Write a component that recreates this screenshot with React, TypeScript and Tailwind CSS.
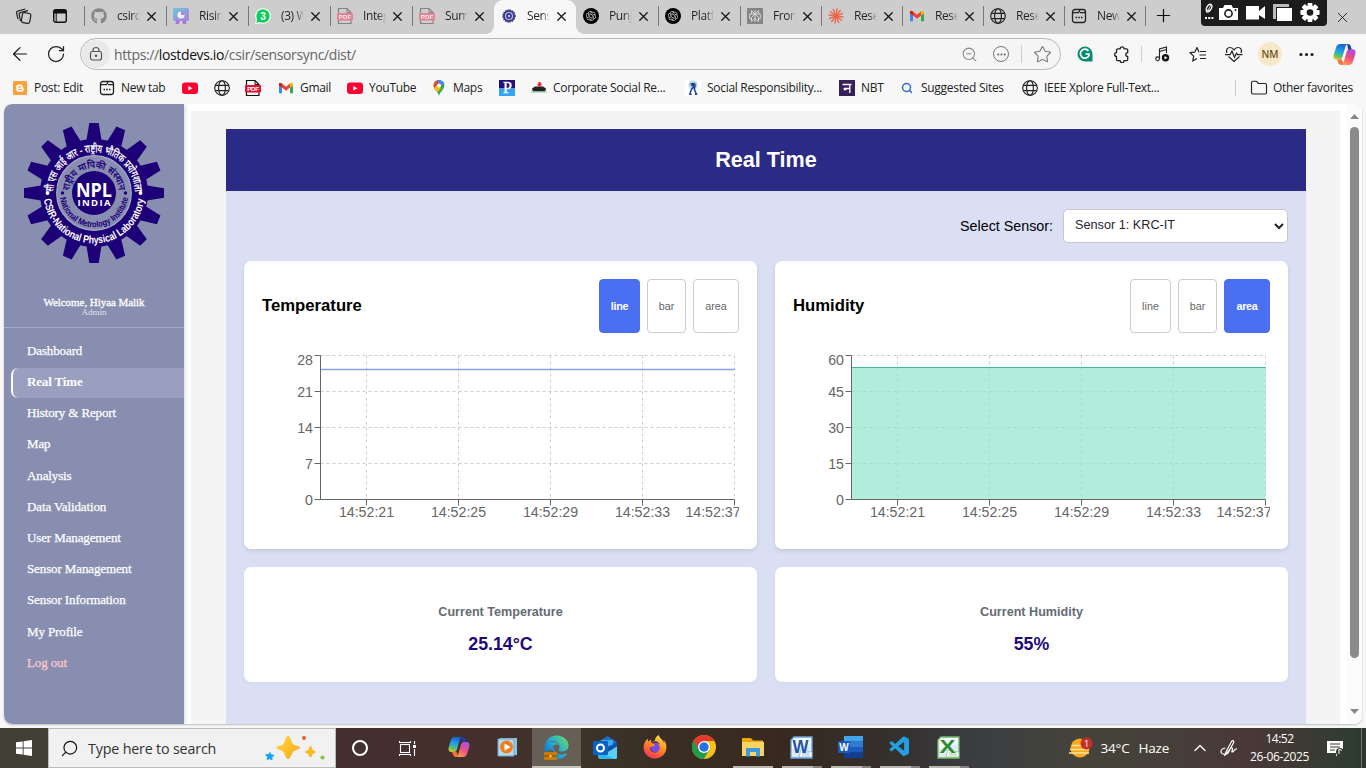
import React from "react";
import {
  ArrowLeft, RotateCw, X, Plus, ZoomOut, Star, Globe, Search,
  Ellipsis, ChevronUp, Folder,
} from "lucide-react";
import { FaGithub, FaEdge, FaFirefoxBrowser } from "react-icons/fa";
import { RiOpenaiFill } from "react-icons/ri";
import { VscVscode } from "react-icons/vsc";

/* ---------- small icons ---------- */

const Tabs3 = () => (
  <svg width="18" height="18" viewBox="0 0 18 18" fill="none" stroke="#222" strokeWidth="1.2">
    <rect x="7" y="6" width="8.500" height="10" rx="2" transform="rotate(10 11 10)" />
    <path d="M5.500 14.200 4.300 8a2.300 2.300 0 0 1 1.600-2.700L13 3.600M3 12.200 1.700 6.500a2.300 2.300 0 0 1 1.600-2.700L10.300 2" />
  </svg>
);
const WindowIcon = () => (
  <svg width="16" height="16" viewBox="0 0 16 16">
    <rect x="1.7" y="1.7" width="12.6" height="12.6" rx="2" fill="none" stroke="#111" strokeWidth="1.4" />
    <path d="M1.5 3.5a2 2 0 0 1 2-2h9a2 2 0 0 1 2 2V5.500h-13z" fill="#111" />
    <path d="M4.200 5v9" stroke="#111" strokeWidth="1" />
  </svg>
);
const NewTabIcon = () => (
  <svg width="16" height="16" viewBox="0 0 16 16" fill="none" stroke="#222" strokeWidth="1.3">
    <rect x="1.500" y="1.500" width="13" height="13" rx="2.500" />
    <path d="M2 4.600h5.500l1.500-2.400M9 4.600h5.500" />
    <path d="M4.500 9.500h1.600M7.200 9.500h1.600M9.900 9.500h1.600" strokeWidth="1.7" />
  </svg>
);
const GlobeIcon = () => (
  <svg width="16" height="16" viewBox="0 0 16 16" fill="none" stroke="#222" strokeWidth="1.150">
    <circle cx="8" cy="8" r="7.300" /><ellipse cx="8" cy="8" rx="3.400" ry="7.300" /><path d="M1.300 5.400h13.400M1.300 10.600h13.400" />
  </svg>
);
const PuzzleIcon = () => (
  <svg width="17" height="17" viewBox="0 0 17 17" fill="none" stroke="#222" strokeWidth="1.300" strokeLinejoin="round">
    <path d="M3.500 5V4a1.200 1.200 0 0 1 1.200-1.200h2.500a1.900 1.900 0 0 1 3.800 0h2.500A1.200 1.200 0 0 1 14.700 4v2.700a1.900 1.900 0 0 0 0 3.800v3a1.200 1.200 0 0 1-1.200 1.200H11a1.900 1.900 0 0 1-3.800 0H4.700a1.200 1.200 0 0 1-1.200-1.200v-3a1.900 1.900 0 0 1 0-3.800z" />
  </svg>
);
const Pdf = ({ faded = false }: { faded?: boolean }) => (
  <svg width="16" height="18" viewBox="0 0 16 18" opacity={faded ? 0.6 : 1}>
    <path d="M1.500 7V1.500h8.500l4 4V7M1.500 13v3.500h12.500V13" fill="none" stroke={faded ? "#555" : "#111"} strokeWidth="1.2" />
    <path d="M10 1.500v4h4" fill="none" stroke={faded ? "#555" : "#111"} />
    <rect x="0" y="6" width="16" height="7.500" rx="1" fill={faded ? "#f2546b" : "#e5112f"} />
    <text x="8" y="12.100" fontSize="6.200" fontWeight="700" fill="#fff" textAnchor="middle" fontFamily="Liberation Sans, sans-serif">PDF</text>
  </svg>
);
const Gmail = () => (
  <svg width="16" height="16" viewBox="0 0 16 16">
    <path d="M1 4v9.300h3V6.500z" fill="#4285f4" />
    <path d="M15 4v9.300h-3V6.500z" fill="#34a853" />
    <path d="M12 3.500 8 6.800 4 3.500v4.100l4 3.200 4-3.200z" fill="#ea4335" />
    <path d="M1 3.800C1 2.400 2.800 2.400 4 3.500v4.100L1 5.400z" fill="#c5221f" />
    <path d="M15 3.800c0-1.400-1.800-1.400-3-.3v4.100l3-2.200z" fill="#fbbc04" />
  </svg>
);
const YouTube = () => (
  <svg width="16" height="16" viewBox="0 0 16 16">
    <rect x="0" y="2.500" width="16" height="11.500" rx="3" fill="#ff0033" />
    <path d="M6.400 5.900v4.700l4.100-2.350z" fill="#fff" />
  </svg>
);
const Claude = () => (
  <svg width="16" height="16" viewBox="0 0 16 16" stroke="#e8674a" strokeWidth="1.4" strokeLinecap="round">
    {[0, 30, 60, 90, 120, 150, 180, 210, 240, 270, 300, 330].map((a) => (
      <path key={a} d="M8 7.500V1" transform={`rotate(${a + 8} 8 8)`} />
    ))}
  </svg>
);
const Perplexity = () => (
  <svg width="16" height="16" viewBox="0 0 16 16">
    <rect width="16" height="16" fill="#858585" />
    <path d="M8 2v12M8 6 4.500 2.500V6M8 6l3.500-3.500V6M2.700 6h10.600v4.700h-2M2.700 6v4.700h2M8 6l-3.500 3.500v4L8 10.300l3.500 3.200v-4z" fill="none" stroke="#dedede" strokeWidth="0.900" />
  </svg>
);
const Canvas = () => (
  <svg width="16" height="16" viewBox="0 0 16 16">
    <defs><linearGradient id="rise" x2="1" y2="1"><stop stopColor="#68c7da" /><stop offset="1" stopColor="#b57ddb" /></linearGradient></defs>
    <rect width="16" height="13" rx="2" fill="url(#rise)" />
    <path d="M3 12h4l-1 4H2.500zM9 12h4l.5 4H10z" fill="#a779dc" />
    <circle cx="8" cy="7" r="3.600" fill="#f4eefb" />
    <path d="M8 7V3.200A3.800 3.800 0 0 1 11.800 7z" fill="#9a8bdc" />
  </svg>
);
const WhatsApp = () => (
  <svg width="16" height="16" viewBox="0 0 16 16">
    <circle cx="8" cy="8" r="7.800" fill="#fff" /><path d="M0 16l1.500-5 4 4z" fill="#fff" />
    <circle cx="8" cy="8" r="6.700" fill="#0bcf5a" /><path d="M1.200 14.800l1.200-4 3 3z" fill="#0bcf5a" />
    <text x="8" y="11.500" fontSize="10" fontWeight="700" textAnchor="middle" fill="#fff" fontFamily="Liberation Sans, sans-serif">3</text>
  </svg>
);
const MiniGear = () => (
  <svg width="16" height="16" viewBox="0 0 16 16">
    <rect width="16" height="16" fill="#fff" />
    <circle cx="8" cy="8" r="6" fill="#3b3c8e" stroke="#3b3c8e" strokeWidth="1.500" strokeDasharray="1.500 0.860" />
    <circle cx="8" cy="8" r="3.500" fill="none" stroke="#b8bbe0" strokeWidth="1.200" />
    <circle cx="8" cy="8" r="0.900" fill="#fff" />
  </svg>
);
const OpenAi = () => (
  <span className="flex h-4 w-4 items-center justify-center rounded-full bg-black text-[#d0d0d0]"><RiOpenaiFill size={12} /></span>
);
const Blogger = () => (
  <svg width="16" height="16" viewBox="0 0 16 16">
    <rect x="1" y="1" width="14" height="14" rx="1.500" fill="#f9a13a" />
    <path d="M6.500 4.500H8.500a2 2 0 0 1 2 2c0 1 1.200.8 1.200 1.900v1.100a2.200 2.200 0 0 1-2.200 2.200h-3a2.200 2.200 0 0 1-2.200-2.200v-2.800a2.200 2.200 0 0 1 2.200-2.200z" fill="#fff" />
    <path d="M6.500 6.800h2M6.500 9.500h3" stroke="#f9a13a" strokeWidth="1.200" strokeLinecap="round" />
  </svg>
);
const MapPin = () => (
  <svg width="16" height="16" viewBox="0 0 16 16">
    <clipPath id="pin"><path d="M8 0a5.400 5.400 0 0 0-5.400 5.400C2.600 9.500 7 11 8 16c1-5 5.400-6.500 5.400-10.600A5.400 5.400 0 0 0 8 0z" /></clipPath>
    <g clipPath="url(#pin)">
      <rect width="16" height="16" fill="#34a853" />
      <path d="M0 0h8v3L3 9H0z" fill="#ea4335" /><path d="M6 0h10v3L9 6z" fill="#4285f4" /><path d="M2 9 6 5l4 3-5 6z" fill="#fbbc04" />
      <circle cx="8" cy="5.400" r="2" fill="#fff" />
    </g>
  </svg>
);
const PIcon = () => (
  <svg width="16" height="16" viewBox="0 0 16 16">
    <rect width="16" height="8.500" fill="#21107a" /><rect y="8.500" width="16" height="7.500" fill="#36a4f4" />
    <text x="8.200" y="12.800" fontSize="16" textAnchor="middle" fill="#fff" stroke="#fff" strokeWidth=".4" fontFamily="Liberation Serif, serif">P</text>
  </svg>
);
const Corporate = () => (
  <svg width="16" height="16" viewBox="0 0 16 16">
    <path d="M1 9h14l1 4H0z" fill="#b7dfb9" />
    <path d="M1 8.500 4 6.500h8l3 2-1 2.800H2z" fill="#222" /><path d="M6.500 3.500h1V2h2v1.500h1v2h-1v1.500h-2V5.500h-1z" fill="#e3252f" />
  </svg>
);
const Social = () => (
  <svg width="16" height="16" viewBox="0 0 16 16">
    <rect width="16" height="16" fill="#fff" /><circle cx="8" cy="5" r="4.600" fill="#b9dcf4" />
    <path d="M4.500 4 8 2.700 11.500 4 8 5.300z" fill="#333" />
    <path d="M6 5.500h4L9.300 9l2 5M10 5.500 6.700 9l-2 5M4.200 14.200h2.500M9.800 14.200h2.500" stroke="#22439a" strokeWidth="1.500" fill="none" />
  </svg>
);
const Nbt = () => (
  <svg width="16" height="16" viewBox="0 0 16 16">
    <rect width="16" height="16" fill="#352058" />
    <path d="M3.500 4.500h9M10.800 4.500v8.500M5 8.500h5.800M7.500 8.500c0 1.500-2.500 1.800-2.600 0" stroke="#fff" strokeWidth="1.300" fill="none" />
  </svg>
);
const Copilot = ({ size = 22, id }: { size?: number; id: string }) => (
  <svg width={size} height={size} viewBox="0 0 22 22">
    <defs>
      <linearGradient id={id + "a"} x1="0.500" y1="0" x2="0.200" y2="1"><stop stopColor="#1565d8" /><stop offset=".45" stopColor="#20a4e8" /><stop offset=".75" stopColor="#58c26a" /><stop offset="1" stopColor="#f0c22a" /></linearGradient>
      <linearGradient id={id + "b"} x1="0.800" y1="0" x2="0.300" y2="1"><stop stopColor="#a34ee8" /><stop offset=".5" stopColor="#ec4e86" /><stop offset="1" stopColor="#ff9a4e" /></linearGradient>
    </defs>
    <path d="M13.500 1h1c1.500 0 2.200 1 2.600 2.500l1 3.200h-3.600z" fill="#1c3fb4" />
    <path d="M7 1h7.500c-1.700 0-2.300 1.300-2.800 3L9 13.500C8.500 15 7.600 16 6 16H3.500C1 16 0 14 .6 11.500L3 4C3.700 2 5 1 7 1z" fill={`url(#${id}a)`} />
    <path d="M15 21H7.500c1.700 0 2.300-1.300 2.800-3L13 8.500C13.500 7 14.400 6 16 6h2.500c2.500 0 3.500 2 2.900 4.500L19 18c-.7 2-2 3-4 3z" fill={`url(#${id}b)`} />
    <path d="M4 15.800h4.500L9.800 19c.3 1-.8 2-2.300 2C5.500 21 5 19 4 15.800z" fill="#f4763a" />
  </svg>
);

/* ---------- browser chrome ---------- */

type Tab = { icon: React.ReactNode; title: string; w: string; active?: boolean; bar?: boolean };
const tabs: Tab[] = [
  { icon: <FaGithub size={16} color="#85868a" />, title: "csirc", w: "w-[82px]", bar: true },
  { icon: <Canvas />, title: "Risin", w: "w-[82px]", bar: true },
  { icon: <WhatsApp />, title: "(3) W", w: "w-[82px]", bar: true },
  { icon: <Pdf faded />, title: "Integ", w: "w-[82px]", bar: true },
  { icon: <Pdf faded />, title: "Sum", w: "w-[82px]", bar: true },
  { icon: <MiniGear />, title: "Sens", w: "w-[82px]", active: true },
  { icon: <OpenAi />, title: "Punj", w: "w-[82px]" },
  { icon: <OpenAi />, title: "Platf", w: "w-[82px]", bar: true },
  { icon: <Perplexity />, title: "Fron", w: "w-[81px]", bar: true },
  { icon: <Claude />, title: "Rese", w: "w-[81px]", bar: true },
  { icon: <Gmail />, title: "Rese", w: "w-[81px]", bar: true },
  { icon: <GlobeIcon />, title: "Rese", w: "w-[81px]", bar: true },
  { icon: <NewTabIcon />, title: "New", w: "w-[81px]", bar: true },
];

function TabStrip() {
  return (
    <div className="flex h-[34px] bg-[#cdcdcd]">
      <div className="flex w-[84px] items-center gap-[19px] pl-[15px] pb-[2px]">
        <Tabs3 />
        <WindowIcon />
      </div>
      {tabs.map((t, i) => (
        <div key={i} className={`relative flex h-full shrink-0 items-center pb-[2px] ${t.w} ${t.active ? "rounded-t-[9px] bg-[#f7f7f7]" : ""}`}>
          <span className={`h-5 w-px ${t.bar ? "bg-[#777]" : ""}`} />
          <span className="ml-[6px] flex w-4 justify-center">{t.icon}</span>
          <span className="ml-[10px] w-[23px] overflow-hidden whitespace-nowrap bg-linear-to-r from-[#222] from-65% to-transparent bg-clip-text text-[12px] tracking-[-0.4px] text-transparent">{t.title}</span>
          <X className="ml-[4px]" size={15} strokeWidth={2.100} color="#151515" />
          {t.active && (
            <>
              <span className="absolute -left-[8px] bottom-0 h-2 w-2 bg-[radial-gradient(circle_at_0_0,#cdcdcd_7.500px,#f7f7f7_8px)]" />
              <span className="absolute -right-[8px] bottom-0 h-2 w-2 bg-[radial-gradient(circle_at_100%_0,#cdcdcd_7.500px,#f7f7f7_8px)]" />
            </>
          )}
        </div>
      ))}
      <div className="flex w-[56px] items-center pb-[3px]">
        <span className="h-5 w-px bg-[#777]" />
        <Plus className="ml-[7px]" size={21} strokeWidth={1.400} color="#111" />
      </div>
      <div className="flex h-[26px] w-[126px] items-center rounded-b-[4px] bg-[#1c1c1c] pl-[3px]">
        <svg width="120" height="26" viewBox="0 0 120 26">
          <g fill="none" stroke="#fff" strokeWidth="1.300"><ellipse cx="5" cy="8" rx="2.300" ry="4" transform="rotate(30 5 8)" /><path d="M2.500 13 7.500 4M2 10l5 0" strokeWidth=".8" /></g>
          <path d="M1 17h2v2H1zM4.200 17h2v2h-2zM7.400 17h2v2h-2z" fill="#fff" />
          <path d="M15 8h4l1.500-3h7L29 8h5v12H15z" fill="#fff" /><circle cx="24.500" cy="13.500" r="3.600" fill="none" stroke="#1c1c1c" strokeWidth="1.600" /><circle cx="31.500" cy="10" r="1" fill="#1c1c1c" />
          <path d="M42 6h13v13.500H42zM55 11l6-5v13l-6-4z" fill="#fff" />
          <path d="M69 4h16v3H72v12h-3z" fill="#bbb" /><path d="M73 8h15v13H73z" fill="#fff" />
          <g transform="translate(106 12.500)" fill="#fff">
            {[0, 45, 90, 135].map((a) => <rect key={a} x="-2.400" y="-9.600" width="4.800" height="19.200" rx=".8" transform={`rotate(${a})`} />)}
            <circle r="7" /><circle r="3.300" fill="#1c1c1c" />
          </g>
        </svg>
      </div>
      <X className="mt-[9px] ml-[7px]" size={17} strokeWidth={1.300} color="#222" />
    </div>
  );
}

const ToolSlot = ({ children, w }: { children: React.ReactNode; w: string }) => (
  <span className={`flex shrink-0 items-center justify-center ${w}`}>{children}</span>
);

function Toolbar() {
  return (
    <div className="flex h-[40px] items-center bg-[#f7f7f7]">
      <ToolSlot w="w-[39px]"><ArrowLeft size={22} strokeWidth={1.300} color="#111" /></ToolSlot>
      <ToolSlot w="w-[33px]"><RotateCw size={20} strokeWidth={1.500} color="#222" /></ToolSlot>
      <div className="ml-[8px] flex h-[32px] w-[981px] shrink-0 items-center rounded-full border border-[#b9b9b9] bg-[#f5f5f5] pl-px">
        <span className="flex h-7 w-7 shrink-0 items-center justify-center rounded-full bg-[#e9e9e9]">
          <svg width="14" height="16" viewBox="0 0 14 16" fill="none" stroke="#555" strokeWidth="1.200"><rect x="1.500" y="5.500" width="11" height="8.500" rx="2" /><path d="M4 5.500V4.500a3 3 0 0 1 6 0v1" /><circle cx="7" cy="9.800" r=".7" fill="#555" /></svg>
        </span>
        <span className="ml-[4px] grow text-[14px] tracking-[-0.370px] text-[#666]">https://<span className="text-[#111]">lostdevs.io</span>/csir/sensorsync/dist/</span>
        <ToolSlot w="w-[32px]"><ZoomOut size={17} strokeWidth={1.500} color="#888" /></ToolSlot>
        <ToolSlot w="w-[32px]">
          <span className="flex h-4 w-4 items-center justify-center rounded-full border border-[#777]"><Ellipsis size={11} strokeWidth={2.500} color="#666" /></span>
        </ToolSlot>
        <ToolSlot w="w-[8px]"><i className="h-[18px] w-px bg-[#cfcfcf]" /></ToolSlot>
        <ToolSlot w="w-[34px]"><Star size={19} strokeWidth={1.400} color="#777" /></ToolSlot>
        <span className="w-px" />
      </div>
      <ToolSlot w="w-[48px]">
        <svg width="16" height="16" viewBox="0 0 16 16"><path d="M8 .5A7.500 7.500 0 0 1 15.500 8v7.500H8A7.500 7.500 0 0 1 8 .5z" fill="#0b8a72" /><path d="M11.500 5A4.500 4.500 0 1 0 12 9.500V8H8.500" fill="none" stroke="#fff" strokeWidth="1.700" /></svg>
      </ToolSlot>
      <ToolSlot w="w-[24px]"><PuzzleIcon /></ToolSlot>
      <ToolSlot w="w-[16px]"><i className="h-[16px] w-px bg-[#cfcfcf]" /></ToolSlot>
      <ToolSlot w="w-[26px]">
        <svg width="16" height="16" viewBox="0 0 16 16" fill="none" stroke="#222" strokeWidth="1.100"><path d="M5.500 12.500V3l7-2v6M5.500 5.500l7-2" /><circle cx="3.600" cy="12.800" r="1.900" /><circle cx="11.500" cy="11.800" r="3.700" fill="#111" stroke="none" /><path d="M10.500 10v3.600l3-1.800z" fill="#fff" stroke="none" /></svg>
      </ToolSlot>
      <ToolSlot w="w-[46px]">
        <svg width="18" height="17" viewBox="0 0 18 17" fill="none" stroke="#222" strokeWidth="1.200" strokeLinejoin="round"><path d="M10 6.300 8 1.500 5.900 6.100 1 6.700l3.700 3.400-1 5 4.300-2.500M11 5.500h6M10.500 9h6.500M11 12.500h6" /></svg>
      </ToolSlot>
      <ToolSlot w="w-[26px]">
        <svg width="18" height="17" viewBox="0 0 18 17" fill="none" stroke="#222" strokeWidth="1.200"><path d="M2 7C.6 3.500 2.500 1.500 5 1.500c1.700 0 3 .8 4 2.300 1-1.500 2.300-2.300 4-2.300 2.500 0 4.400 2 3 5.500M3.500 10.500 9 15.500l5.500-5M0 8.700h5l2-3.500 2.500 6 2-4 1 1.500h5" /></svg>
      </ToolSlot>
      <ToolSlot w="w-[46px]"><span className="flex h-6 w-6 items-center justify-center rounded-full bg-[#f7e8c9] text-[10px] font-semibold text-[#6e5418]">NM</span></ToolSlot>
      <ToolSlot w="w-[26px]"><Ellipsis size={19} strokeWidth={2.100} color="#222" /></ToolSlot>
      <ToolSlot w="w-[50px]"><Copilot id="tc" size={23} /></ToolSlot>
    </div>
  );
}

const favorites: { icon: React.ReactNode; label?: string; w: string }[] = [
  { icon: <Blogger />, label: "Post: Edit", w: "w-[87px]" },
  { icon: <NewTabIcon />, label: "New tab", w: "w-[83px]" },
  { icon: <YouTube />, w: "w-[32px]" },
  { icon: <GlobeIcon />, w: "w-[31px]" },
  { icon: <Pdf />, w: "w-[33px]" },
  { icon: <Gmail />, label: "Gmail", w: "w-[69px]" },
  { icon: <YouTube />, label: "YouTube", w: "w-[84px]" },
  { icon: <MapPin />, label: "Maps", w: "w-[68px]" },
  { icon: <PIcon />, w: "w-[32px]" },
  { icon: <Corporate />, label: "Corporate Social Re...", w: "w-[154px]" },
  { icon: <Social />, label: "Social Responsibility...", w: "w-[154px]" },
  { icon: <Nbt />, label: "NBT", w: "w-[60px]" },
  { icon: <Search size={12} strokeWidth={3} color="#2b6cc8" />, label: "Suggested Sites", w: "w-[123px]" },
  { icon: <GlobeIcon />, label: "IEEE Xplore Full-Text...", w: "w-[213px]" },
];

function FavoritesBar() {
  return (
    <div className="flex h-[30px] items-center bg-[#f7f7f7] pl-[12px] pb-[2px] text-[12px] tracking-[-0.3px] whitespace-nowrap text-[#222]">
      {favorites.map((f, i) => (
        <div key={i} className={`flex shrink-0 items-center gap-[6px] ${f.w}`}>
          <span className="flex w-4 shrink-0 justify-center">{f.icon}</span>
          {f.label}
        </div>
      ))}
      <i className="h-4 w-px bg-[#ccc]" />
      <Folder className="mr-[5px] ml-[14px]" size={18} strokeWidth={1.500} color="#222" />
      Other favorites
    </div>
  );
}

/* ---------- sidebar ---------- */

function Emblem() {
  const teeth = Array.from({ length: 16 }, (_, i) => i * 22.5);
  return (
    <svg width="140" height="140" viewBox="-70 -70 140 140">
      <defs>
        <path id="outerTop" d="M-40.600 4A40.800 40.800 0 1 1 40.600 4" />
        <path id="outerBottom" d="M-50.500 0A50.500 50.500 0 0 0 50.500 0" />
        <path id="innerTop" d="M-24.800 3A25 25 0 1 1 24.800 3" />
        <path id="innerBottom" d="M-34.300 0A34.300 34.300 0 0 0 34.300 0" />
      </defs>
      <g fill="#1d0078">
        {teeth.map((a) => <path key={a} d="M-8-50-4.700-70H4.700L8-50z" transform={`rotate(${a})`} />)}
        <circle r="54" />
      </g>
      <circle r="37.300" fill="#888eb0" stroke="#a9adca" strokeWidth="1.200" />
      <circle r="22" fill="#1d0078" />
      <g fontFamily="'Liberation Sans Narrow', 'Liberation Sans', 'Noto Sans', sans-serif" fontWeight="700" textAnchor="middle">
        <g fill="#fff">
          <text fontSize="11" fontWeight="400" stroke="#fff" strokeWidth=".3"><textPath href="#outerTop" startOffset="50%" textLength="126" lengthAdjust="spacingAndGlyphs">सी एस आई आर - राष्ट्रीय भौतिक प्रयोगशाला</textPath></text>
          <text fontSize="10.800"><textPath href="#outerBottom" startOffset="50%" textLength="146" lengthAdjust="spacingAndGlyphs">CSIR-National Physical Laboratory</textPath></text>
          <circle cx="-46.500" r="1.900" /><circle cx="46.500" r="1.900" />
          <text y="3.500" fontSize="19" textLength="36" lengthAdjust="spacingAndGlyphs" fontFamily="Open Sans, sans-serif">NPL</text>
          <text y="12.800" fontSize="9.500" textLength="33" fontFamily="Open Sans, sans-serif">INDIA</text>
        </g>
        <g fill="#1d0078">
          <text fontSize="9.500" fontWeight="400" stroke="#1d0078" strokeWidth=".3"><textPath href="#innerTop" startOffset="50%" textLength="74" lengthAdjust="spacingAndGlyphs">राष्ट्रीय मापिकी संस्थान</textPath></text>
          <text fontSize="8.800"><textPath href="#innerBottom" startOffset="50%" textLength="98" lengthAdjust="spacingAndGlyphs">National Metrology Institute</textPath></text>
          <circle cx="-31.500" r="1.700" /><circle cx="31.500" r="1.700" />
        </g>
      </g>
    </svg>
  );
}

const menu = ["Dashboard", "Real Time", "History & Report", "Map", "Analysis", "Data Validation", "User Management", "Sensor Management", "Sensor Information", "My Profile", "Log out"];

function Sidebar() {
  return (
    <aside className="flex w-[180px] shrink-0 flex-col rounded-l-[8px] bg-[#888eb0] font-['Liberation_Serif',serif] text-white shadow-[1px_0_4px_#8885]">
      <div className="flex justify-center pt-[19px]"><Emblem /></div>
      <div className="mt-[33px] flex h-[32px] flex-col items-center border-b border-[#a6abc9] leading-none">
        <span className="text-[11px] leading-[12px] tracking-[-0.050px] [-webkit-text-stroke:0.3px_white]">Welcome, Hiyaa Malik</span>
        <span className="text-[9px] leading-[9px] text-[#e0e3ef]">Admin</span>
      </div>
      <nav className="mt-[8px] flex flex-col">
        {menu.map((m) => {
          const active = m === "Real Time";
          return (
            <div key={m} className="flex h-[31.200px] items-center pl-[7px]">
              <a className={`flex h-[30px] w-full items-center pb-[2px] text-[13px] ${active ? "rounded-l-[7px] border-l-2 border-white bg-[#9b9fbf] pl-[14px] font-bold tracking-[-0.150px]" : "pl-[16px] tracking-[-0.120px] [-webkit-text-stroke:0.250px]"} ${m === "Log out" ? "text-[#ffc9cd]" : "text-white"}`}>{m}</a>
            </div>
          );
        })}
      </nav>
    </aside>
  );
}

/* ---------- charts ---------- */

type ChartKind = "line" | "bar" | "area";
const times = ["14:52:21", "14:52:25", "14:52:29", "14:52:33", "14:52:37"];

function Chart({ ticks, value, kind }: { ticks: number[]; value: number; kind: ChartKind }) {
  const max = ticks[0];
  const y = 4 + 144 * (1 - value / max);
  return (
    <svg className="mt-[18px] block" width="477" height="180" viewBox="0 0 477 180" fontFamily="'Liberation Sans', Arial, sans-serif" fontSize="14.200" fill="#666">
      <g stroke="#ccc" strokeDasharray="3 3">
        {ticks.slice(0, 4).map((t, i) => <path key={t} d={`M58.500 ${4.500 + i * 36}H472.500`} />)}
        {times.map((t, i) => <path key={t} d={`M${104.500 + i * 92} 4.500V148.500`} />)}
      </g>
      {kind === "area" && (
        <>
          <path d={`M58.500 ${y}H472.500V148.500H58.500z`} fill="#b2ecdb" />
          <g stroke="#a3dfcb" strokeDasharray="3 3">
            {[1, 2, 3].map((i) => <path key={i} d={`M58.500 ${4.500 + i * 36}H472.500`} />)}
            {times.map((t, i) => <path key={t} d={`M${104.500 + i * 92} ${y}V148.500`} />)}
          </g>
        </>
      )}
      <path d={`M58.500 ${Math.floor(y) + 0.500}H472.500`} stroke={kind === "area" ? "#3fb995" : "#8aa0f5"} strokeWidth={kind === "area" ? 1 : 1.300} fill="none" />
      <g stroke="#666" fill="none">
        <path d="M58.500 4.500V148.500H472.500" />
        {ticks.map((t, i) => <path key={t} d={`M52.500 ${4.500 + i * 36}h6`} />)}
        {times.map((t, i) => <path key={t} d={`M${104.500 + i * 92} 148.500v6`} />)}
      </g>
      {ticks.map((t, i) => <text key={t} x="51" y={i === 0 ? 14 : 10 + i * 36} textAnchor="end">{t}</text>)}
      {times.map((t, i) => <text key={t} x={i === 4 ? 451 : 104.500 + i * 92} y="166" textAnchor="middle">{t}</text>)}
    </svg>
  );
}

function ChartCard({ title, active, ticks, value }: { title: string; active: ChartKind; ticks: number[]; value: number }) {
  const kinds: [ChartKind, string][] = [["line", "w-[41px]"], ["bar", "w-[39px]"], ["area", "w-[46px]"]];
  return (
    <section className="h-[288px] overflow-hidden rounded-[7px] bg-white p-[18px] shadow-[0_2px_4px_rgba(0,0,0,0.100)]">
      <div className="flex h-[54px] items-center justify-between">
        <h3 className="text-[16.700px] font-bold text-black">{title}</h3>
        <div className="flex gap-[7px]">
          {kinds.map(([k, w]) => (
            <button key={k} className={`h-[54px] rounded-[4px] border text-[10.800px] ${w} ${k === active ? "border-[#4a6ff0] bg-[#4a6ff0] font-bold tracking-[-0.300px] text-white" : "border-[#ccc] bg-white text-[#666]"}`}>{k}</button>
          ))}
        </div>
      </div>
      <Chart ticks={ticks} value={value} kind={active} />
    </section>
  );
}

function StatCard({ label, value }: { label: string; value: string }) {
  return (
    <section className="flex h-[115px] flex-col items-center rounded-[7px] bg-white pt-[36px] shadow-[0_2px_4px_rgba(0,0,0,0.030)]">
      <h4 className="text-[12.600px] leading-[19px] font-bold text-[#666b73]">{label}</h4>
      <p className="mt-[10px] text-[17.800px] leading-[24px] font-bold text-[#1f0a78]">{value}</p>
    </section>
  );
}

function Dashboard() {
  return (
    <main className="mt-[7px] ml-[7px] flex w-[1149px] flex-col bg-[#f4f4f4] px-[35px] pr-[34px] pt-[18px] font-['Liberation_Sans',Arial,sans-serif]">
      <header className="flex h-[62px] shrink-0 items-center justify-center bg-[#2b2a85] text-[21.600px] font-bold text-white">Real Time</header>
      <div className="flex grow flex-col gap-[18px] bg-[#dbdff3] p-[18px]">
        <div className="flex h-[34px] items-center justify-end gap-[10px]">
          <label className="pt-px text-[14.300px] text-black">Select Sensor:</label>
          <select className="h-[34px] w-[225px] rounded-[5px] border border-[#c8c8c8] bg-white pb-[2px] pl-[7px] text-[12.700px] text-[#1f2430]">
            <option>Sensor 1: KRC-IT</option>
          </select>
        </div>
        <div className="grid grid-cols-2 gap-[18px]">
          <ChartCard title="Temperature" active="line" ticks={[28, 21, 14, 7, 0]} value={25.14} />
          <ChartCard title="Humidity" active="area" ticks={[60, 45, 30, 15, 0]} value={55} />
          <StatCard label="Current Temperature" value="25.14°C" />
          <StatCard label="Current Humidity" value="55%" />
        </div>
      </div>
    </main>
  );
}

function Viewport() {
  return (
    <div className="flex h-[624px] bg-[#f7f7f7] px-[4px] pb-[4px]">
      <div className="flex h-[620px] w-[1358px] overflow-hidden rounded-[8px] bg-white shadow-[0_1px_2px_#9999]">
        <Sidebar />
        <Dashboard />
        <div className="ml-[7px] flex w-[15px] flex-col items-center justify-between bg-[#fbfbfb] py-[9px]">
          <svg width="9" height="6" viewBox="0 0 9 6"><path d="M0 6 4.500 1 9 6z" fill="#868686" /></svg>
          <i className="mt-[8px] mb-auto h-[531px] w-[9px] rounded-full bg-[#8a8a8a]" />
          <svg width="9" height="6" viewBox="0 0 9 6"><path d="M0 0 4.500 5 9 0z" fill="#868686" /></svg>
        </div>
      </div>
    </div>
  );
}

/* ---------- taskbar ---------- */

const WinLogo = () => (
  <svg width="16" height="16" viewBox="0 0 16 16" fill="#fff"><path d="M0 2.300 6.700 1.400V7.500H0zM7.600 1.200 16 0v7.500H7.600zM0 8.500h6.700v6.100L0 13.700zM7.600 8.500H16V16l-8.400-1.200z" /></svg>
);
const Sparkles = () => (
  <svg width="62" height="26" viewBox="0 0 62 26">
    <defs><linearGradient id="sp" x2="1" y2="1"><stop stopColor="#ffd93b" /><stop offset="1" stopColor="#f6a81c" /></linearGradient></defs>
    <path d="M24 1c2.500 0 3.500 6 5 8s7 1.500 7 3.500-5.500 2.500-7 4.500-2.500 7-5 7-3-5-4.500-7-7-2.500-7-4.500 5.500-1.500 7-3.500S21.500 1 24 1z" fill="url(#sp)" />
    <path d="M46.500 11c1.300 0 1.500 3 2.300 4s3 .7 3 2-2.200 1-3 2-1 3.500-2.300 3.500-1.500-2.500-2.300-3.500-3.200-.7-3.200-2 2.400-1 3.200-2 1-4 2.300-4z" fill="#fbb924" />
    <path d="m6 17.500 1 2.500 3 .3-2.200 2 .2 2.700-2.300-1.500-2.500 1 .5-2.700-2-2 3-.3z" fill="#12a5f4" stroke="#12a5f4" strokeLinejoin="round" />
    <circle cx="40" cy="3" r="2" fill="#ee5b24" /><circle cx="58.500" cy="22.500" r="2.100" fill="#86c440" />
  </svg>
);
const TaskView = () => (
  <svg width="17" height="17" viewBox="0 0 17 17" fill="none" stroke="#fff" strokeWidth="1.100"><rect x="1.500" y="4.500" width="9" height="8" /><path d="M.5 1v1.500h11V1M.5 16v-1.500h11V16M15.500 1v3M15.500 9v7" /><path d="M14 5h3v3h-3z" fill="#fff" stroke="none" /></svg>
);
const Media = () => (
  <svg width="22" height="20" viewBox="0 0 22 20"><path d="M3 1h17v17H3z" fill="#8fc4e4" /><path d="M1 2h16v17H1z" fill="#b8d9ec" stroke="#6aa7cc" /><circle cx="9.500" cy="10" r="6.500" fill="#f47c20" /><path d="M7.500 6.300v7.500l6-3.800z" fill="#fff" /></svg>
);
const EdgeIcon = () => (
  <span className="relative flex h-[25px] w-[25px]">
    <svg width="0" height="0" className="absolute"><defs><linearGradient id="edge" x1="0" y1="1" x2="1" y2="0.200"><stop stopColor="#0b5bb5" /><stop offset=".5" stopColor="#22a5df" /><stop offset="1" stopColor="#5fd96a" /></linearGradient></defs></svg>
    <FaEdge size={25} style={{ fill: "url(#edge)" }} />
    <svg className="absolute bottom-0 left-0" width="13" height="10" viewBox="0 0 13 10"><path d="M4 3V1h5v2" fill="none" stroke="#7a4a05" /><rect y="2" width="13" height="8" rx="1" fill="#c87a0c" /><path d="M0 6h13" stroke="#7c4603" /><path d="M5.500 5h2v2.500h-2z" fill="#ffd257" /></svg>
  </span>
);
const Outlook = () => (
  <svg width="25" height="23" viewBox="0 0 25 23"><path d="M5 6 14.500 0 24 6v3H5z" fill="#1a6fc0" /><path d="M8 4h12v9H8z" fill="#3fa7ea" /><path d="M5 8l19 0v13a2 2 0 0 1-2 2H7a2 2 0 0 1-2-2z" fill="#2fb8f0" /><path d="M24 7 9 17l13 6a2 2 0 0 0 2-2z" fill="#5ccff6" /><path d="M24 6.500v4l-10 6-3-4z" fill="#1550a8" /><rect y="5" width="15" height="14" rx="1" fill="#0a63c4" /><circle cx="7.500" cy="12" r="3.500" fill="none" stroke="#fff" strokeWidth="2" /></svg>
);
const Firefox = () => (
  <span className="relative flex">
    <svg width="0" height="0" className="absolute"><defs><linearGradient id="ff" x1="0.800" y1="0" x2="0.300" y2="1"><stop stopColor="#ffe14a" /><stop offset=".5" stopColor="#ff8a1e" /><stop offset="1" stopColor="#f5305e" /></linearGradient></defs></svg>
    <svg className="absolute top-[7px] left-[7px]" width="11" height="11"><circle cx="5.500" cy="5.500" r="5" fill="#7a4be0" /></svg>
    <FaFirefoxBrowser size={24} style={{ fill: "url(#ff)" }} className="relative" />
  </span>
);
const Chrome = () => (
  <svg width="24" height="24" viewBox="0 0 24 24">
    <circle cx="12" cy="12" r="12" fill="#fbc116" />
    <path d="M12 12 1.600 6A12 12 0 0 1 22.400 6H12z" fill="#e33b2e" />
    <path d="M1.600 6A12 12 0 0 0 12 24l5.200-9-5.200-3z" fill="#229a4c" />
    <path d="M1.600 6 6.800 15 12 12V6z" fill="#e33b2e" /><path d="M6.800 15 1.600 6a12 12 0 0 0 0 12z" fill="#229a4c" />
    <circle cx="12" cy="12" r="6" fill="#fff" /><circle cx="12" cy="12" r="4.700" fill="#1f73e8" />
  </svg>
);
const Explorer = () => (
  <svg width="22" height="19" viewBox="0 0 22 19"><path d="M0 0h9l2 2.500h10V8H0z" fill="#e8a713" /><path d="M0 4h22v14H0z" fill="#fcd462" /><path d="M4 18.500V10h14v8.500h-4V14H8v4.500z" fill="#3c9be0" /></svg>
);
const Office2010 = ({ letter, c1, c2 }: { letter: string; c1: string; c2: string }) => (
  <svg width="23" height="23" viewBox="0 0 23 23"><path d="M4 1h18v21H1V4z" fill="#dfeaf2" stroke={c2} strokeWidth="1.300" /><path d="M5 2h16v6L2 13V5z" fill="#f4f9fc" /><path d="M11 14l11 2v5H9z" fill="#fff" stroke={c2} strokeWidth=".6" /><path d="M12 17h8M12 19h8" stroke={c2} strokeWidth=".7" /><text x="10.500" y="16.500" fontSize="18" fontWeight="700" textAnchor="middle" fill={c1} textLength="16" lengthAdjust="spacingAndGlyphs" fontFamily="Liberation Sans, sans-serif">{letter}</text></svg>
);
const Word = () => (
  <svg width="25" height="22" viewBox="0 0 25 22"><path d="M6 0h19v5.500H6z" fill="#41a5ee" /><path d="M6 5.500h19V11H6z" fill="#2b7cd3" /><path d="M6 11h19v5.500H6z" fill="#185abd" /><path d="M6 16.500h19V22H6z" fill="#103f91" /><rect y="5" width="12" height="12" rx="1" fill="#185abd" /><text x="6" y="14.500" fontSize="10" fontWeight="700" textAnchor="middle" fill="#fff" fontFamily="Liberation Sans, sans-serif">W</text></svg>
);

const apps: { icon: React.ReactNode; run?: boolean; multi?: boolean; active?: boolean }[] = [
  { icon: <Copilot id="bc" /> },
  { icon: <Media /> },
  { icon: <EdgeIcon />, active: true },
  { icon: <Outlook /> },
  { icon: <Firefox /> },
  { icon: <Chrome /> },
  { icon: <Explorer />, run: true },
  { icon: <Office2010 letter="W" c1="#1c55a8" c2="#6ba3dc" />, run: true, multi: true },
  { icon: <Word />, run: true, multi: true },
  { icon: <VscVscode size={24} color="#249fe0" />, run: true, multi: true },
  { icon: <Office2010 letter="X" c1="#2e8b34" c2="#74b96e" />, run: true, multi: true },
];

function Taskbar() {
  return (
    <div className="flex h-[40px] w-full bg-[linear-gradient(90deg,#423f37_0,#423f37_48px,#43302f_340px,#452f2b_500px,#3d352a_570px,#3a2e24_660px,#38291f_780px,#34312e_900px,#3b3d42_975px,#45433a_1080px,#45413a_1150px,#4a3836_1250px,#303c31_1350px,#2b352d_1366px)]">
      <div className="flex w-[48px] items-center justify-center"><WinLogo /></div>
      <div className="flex w-[288px] items-center border border-[#bbb] bg-[#f1f1f1]">
        <Search className="ml-[11px] -scale-x-100" size={19} strokeWidth={1.500} color="#111" />
        <span className="ml-[9px] grow pt-px text-[14.300px] tracking-[-0.180px] text-[#333]">Type here to search</span>
        <span className="mr-[9px]"><Sparkles /></span>
      </div>
      <div className="flex w-[48px] items-center justify-center"><i className="h-4 w-4 rounded-full border-[2.500px] border-white" /></div>
      <div className="flex w-[50px] items-center justify-center pr-[3px]"><TaskView /></div>
      {apps.map((a, i) => (
        <div key={i} className={`flex h-full w-[49.050px] shrink-0 flex-col items-center ${a.active ? "bg-[#675f56]" : ""}`}>
          <span className="flex h-[38px] items-center">{a.icon}</span>
          {a.active && <i className="h-[2px] w-full bg-[#c4c0bc]" />}
          {a.run && <span className="flex h-[2px] w-[40px]"><i className="grow bg-[#b9b6b2]" />{a.multi && <i className="w-[9px] bg-[#85827f]" />}</span>}
        </div>
      ))}
      <div className="ml-[94px] flex items-center text-[13.500px] tracking-[-0.200px] whitespace-pre text-white">
        <svg width="25" height="22" viewBox="0 0 25 22"><circle cx="12" cy="11" r="9.500" fill="#f9a91c" /><path d="M4 8.500h12M2 12.500h19M1 16h20" stroke="#ffe3a1" strokeWidth="1.700" /><circle cx="18.500" cy="6.500" r="6" fill="#c62f26" /><text x="18.500" y="9.800" fontSize="9" fill="#fff" textAnchor="middle" fontFamily="Open Sans, sans-serif">1</text></svg>
        <span className="ml-[8px] w-[38px]">34°C</span>
        <span className="w-[51px]">Haze</span>
        <ChevronUp size={20} strokeWidth={1.500} />
        <svg className="ml-[10px]" width="18" height="18" viewBox="0 0 18 18" fill="none" stroke="#fff" strokeWidth="1.200"><path d="M6 13 11.500 2.500c1-1.500 3-.5 2 1.200L8 14l-3 2zM5.500 9C2 9 0 12 1.500 14s5 1.500 7-2 4-4 4-2-1.500 3 0 3 2-3.500 4.500-3" /></svg>
      </div>
      <div className="ml-[11px] flex w-[62px] flex-col items-center justify-center text-[12px] leading-[18px] tracking-[-0.500px] whitespace-nowrap text-white">
        <span>14:52</span>
        <span className="tracking-[-0.350px]">26-06-2025</span>
      </div>
      <div className="ml-[16px] flex items-center">
        <svg width="17" height="17" viewBox="0 0 17 17"><path d="M0 1h16v12h-4l-3 3.500V13H0z" fill="#fff" /><path d="M3 4h10M3 7h10M3 10h5" stroke="#303a31" strokeWidth="1.200" /><circle cx="13" cy="12" r="4" fill="#303a31" /><path d="M12 14V9l3 1.500" fill="none" stroke="#fff" /></svg>
      </div>
      <i className="mr-[4px] ml-auto w-px bg-[#6b746c]" />
    </div>
  );
}

export default function App() {
  return (
    <div className="flex h-[768px] w-[1366px] flex-col overflow-hidden bg-[#f7f7f7] font-['Open_Sans','Noto_Sans',sans-serif]">
      <TabStrip />
      <Toolbar />
      <FavoritesBar />
      <Viewport />
      <Taskbar />
    </div>
  );
}
